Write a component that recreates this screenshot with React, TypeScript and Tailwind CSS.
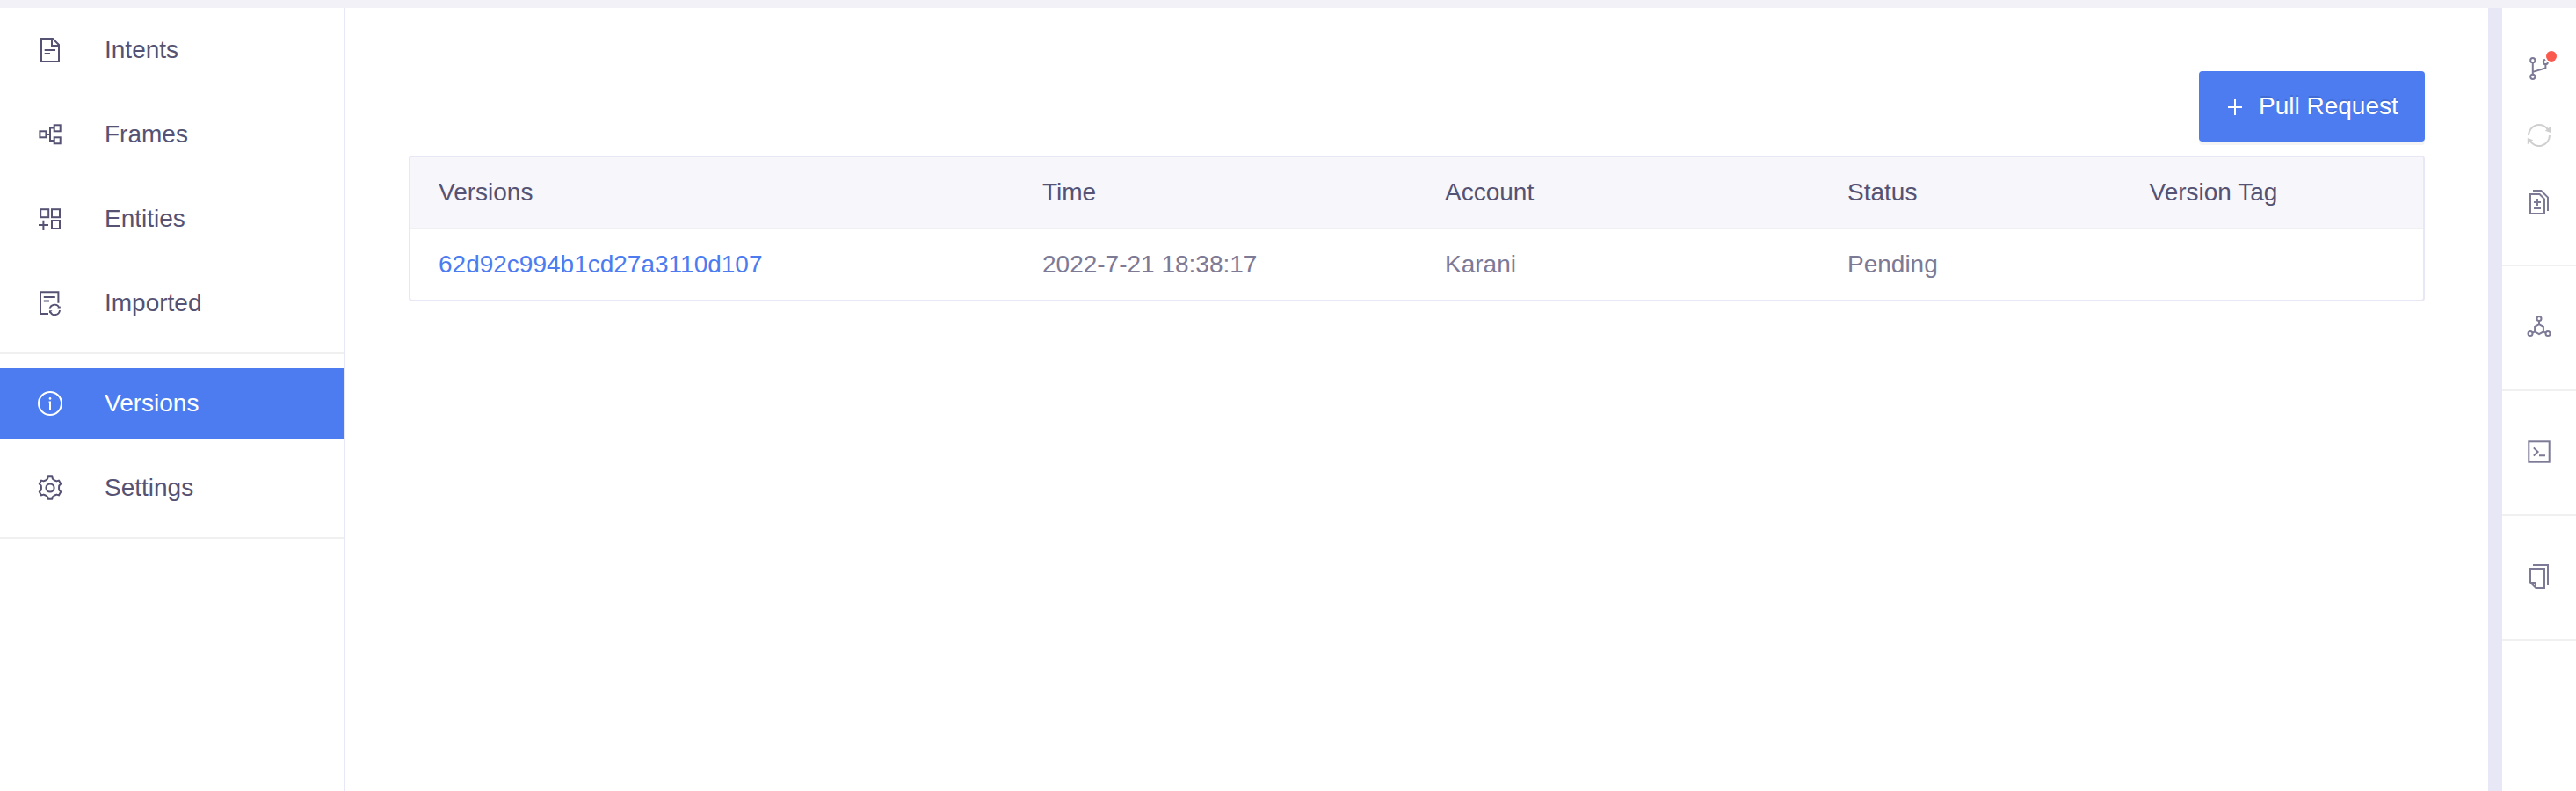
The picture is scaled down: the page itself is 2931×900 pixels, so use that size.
import type { ReactNode } from "react";

function Icon({ children }: { children: ReactNode }) {
  return (
    <svg
      className="h-7 w-7 shrink-0 overflow-visible"
      viewBox="0 0 28 28"
      fill="none"
      stroke="currentColor"
      strokeWidth={2}
    >
      {children}
    </svg>
  );
}

const IntentsIcon = () => (
  <Icon>
    <path d="M4 1H17L24 8V27H4Z" />
    <path d="M16 1V9H24" />
    <path d="M7.7 14H20M7.7 18H14" />
  </Icon>
);

const FramesIcon = () => (
  <Icon>
    <rect x="2.4" y="10.3" width="7" height="7" />
    <rect x="18.7" y="3.3" width="7" height="7" />
    <rect x="18.7" y="17.3" width="7" height="7" />
    <path d="M9.5 14H14M18 6.5H14V21H18" />
  </Icon>
);

const EntitiesIcon = () => (
  <Icon>
    <rect x="3.2" y="3.2" width="9" height="9" />
    <rect x="16" y="3.2" width="9" height="9" />
    <rect x="16" y="16" width="9" height="9" />
    <path d="M1 21H12M6.4 15.8V27" />
  </Icon>
);

const ImportedIcon = () => (
  <Icon>
    <path d="M23.4 13.7V1.3H3V26H12" />
    <path d="M6.8 7H19.8M6.8 11.4H13" />
    <path d="M13.7 20.6A5.6 5.6 0 0 1 24.4 19M25 22A5.6 5.6 0 0 1 14.3 23.8" strokeWidth={1.9} />
    <path d="M25.8 17.2V20.6H22.2ZM13 25.6V22.2H16.6Z" fill="currentColor" stroke="none" />
  </Icon>
);

const InfoIcon = () => (
  <Icon>
    <circle cx="14" cy="14" r="13" />
    <path d="M12.6 12.4H14V21" />
    <circle cx="14" cy="8.4" r="1.3" fill="currentColor" stroke="none" />
  </Icon>
);

const TOOTH = [
  [-4.2, -9.2],
  [-2.9, -10.2],
  [-2.3, -12.8],
  [2.3, -12.8],
  [2.9, -10.2],
  [4.2, -9.2],
];

function gearPath() {
  const points: string[] = [];
  for (let i = 0; i < 6; i++) {
    const a = (i * Math.PI) / 3;
    for (const [x, y] of TOOTH) {
      const px = 14 + x * Math.cos(a) - y * Math.sin(a);
      const py = 14 + x * Math.sin(a) + y * Math.cos(a);
      points.push(`${px.toFixed(2)} ${py.toFixed(2)}`);
    }
  }
  return `M${points.join("L")}Z`;
}

const GearIcon = () => (
  <Icon>
    <path d={gearPath()} strokeLinejoin="round" />
    <circle cx="14" cy="14" r="4.6" />
  </Icon>
);

const BranchIcon = () => (
  <Icon>
    <circle cx="6.8" cy="4.7" r="2.6" />
    <circle cx="6.8" cy="23.3" r="2.6" />
    <circle cx="21.4" cy="6.4" r="2.6" />
    <path d="M6.8 7.3V20.7M6.8 17.9L21.4 13.4V9" />
  </Icon>
);

const RefreshIcon = () => (
  <Icon>
    <path d="M2 14A12 12 0 0 1 24.8 8.8M26 14A12 12 0 0 1 3.2 19.2" />
    <path
      d="M27.2 3.8V11L20.8 8.8ZM0.8 24.2V17L7.2 19.2Z"
      fill="currentColor"
      stroke="none"
    />
  </Icon>
);

const DiffIcon = () => (
  <Icon>
    <path d="M4 5H14.6L20 10.4V27H4Z" />
    <path d="M7 1H16.4L24 8.6V24" />
    <path d="M8 14H16M12 10V18M8 21H16" />
  </Icon>
);

const GraphIcon = () => (
  <Icon>
    <circle cx="14" cy="4.4" r="2.5" />
    <circle cx="4" cy="21.6" r="2.5" />
    <circle cx="24" cy="21.6" r="2.5" />
    <path d="M14 11.2L18.9 13.9V19.4L14 22.2L9.1 19.4V13.9Z" />
    <path d="M14 6.9V11.2M9.1 19.4L6.2 20.8M18.9 19.4L21.8 20.8" />
  </Icon>
);

const TerminalIcon = () => (
  <Icon>
    <rect x="2.3" y="2.3" width="23.4" height="23.4" />
    <path d="M7.8 9.4L12.6 14L7.8 18.6M14 18.2H21" />
  </Icon>
);

const CopyIcon = () => (
  <Icon>
    <path d="M4 5H20V27H10.4L4 20.6Z" />
    <path d="M4 21H10V27" />
    <path d="M7 1H24V24" />
  </Icon>
);

function NavItem({ icon, label, active }: { icon: ReactNode; label: string; active?: boolean }) {
  return (
    <a
      className={
        active
          ? "flex h-20 items-center gap-12 bg-[#4c7cf0] pl-[43px] text-white"
          : "flex h-20 items-center gap-12 pl-[43px] text-[#555273]"
      }
    >
      {icon}
      <span>{label}</span>
    </a>
  );
}

const GRID = "grid h-20 grid-cols-[30%_20%_20%_15%_15%] items-center";

export default function App() {
  return (
    <div className="flex h-[900px] w-[2931px] flex-col overflow-hidden bg-white font-['Liberation_Sans',Arial,sans-serif] text-[28px] leading-[44px]">
      <header className="h-[9px] shrink-0 bg-[#f2f1f8]" />
      <div className="flex min-h-0 flex-1">
        <aside className="w-[393px] shrink-0 border-r-2 border-[#e8e7f6]">
          <nav className="flex flex-col gap-4 border-b-2 border-[#f0f0f0] pt-2 pb-4">
            <NavItem icon={<IntentsIcon />} label="Intents" />
            <NavItem icon={<FramesIcon />} label="Frames" />
            <NavItem icon={<EntitiesIcon />} label="Entities" />
            <NavItem icon={<ImportedIcon />} label="Imported" />
          </nav>
          <nav className="flex flex-col gap-4 border-b-2 border-[#f0f0f0] py-4">
            <NavItem icon={<InfoIcon />} label="Versions" active />
            <NavItem icon={<GearIcon />} label="Settings" />
          </nav>
        </aside>

        <main className="flex min-w-0 flex-1 flex-col gap-4 px-[72px] pt-[72px]">
          <button className="flex h-20 w-[257px] shrink-0 items-center gap-[19px] self-end rounded-[4px] bg-[#4c7cf0] pl-[33px] text-white shadow-[0_4px_0_rgba(0,0,0,0.045)] [text-shadow:0_-2px_0_rgba(0,0,0,0.12)]">
            <svg className="mt-0.5 h-[18px] w-4 shrink-0" viewBox="0 0 16 18" stroke="currentColor" strokeWidth={2}>
              <path d="M0 9H16M8 0V18" />
            </svg>
            <span className="whitespace-nowrap">Pull Request</span>
          </button>

          <section className="overflow-hidden rounded-[4px] border-2 border-[#e8e7f6]">
            <div className="border-b-2 border-[#f0f0f3] bg-[#f6f6fb] text-[#555273]">
              <div className={GRID}>
                <span className="pl-8">Versions</span>
                <span className="pl-8">Time</span>
                <span className="pl-8">Account</span>
                <span className="pl-8">Status</span>
                <span className="pl-8">Version Tag</span>
              </div>
            </div>
            <div className="text-[#7d7a96]">
              <div className={GRID}>
                <a className="pl-8 text-[#4c7cf0]">62d92c994b1cd27a3110d107</a>
                <span className="pl-8">2022-7-21 18:38:17</span>
                <span className="pl-8">Karani</span>
                <span className="pl-8">Pending</span>
                <span className="pl-8" />
              </div>
            </div>
          </section>
        </main>

        <aside className="w-[100px] shrink-0 border-l-[16px] border-[#e8e7f6] text-[#7d7a96]">
          <div className="flex h-[294px] flex-col items-center gap-12 border-b-2 border-[#f0f0f0] pt-[55px]">
            <div className="relative h-7 w-7">
              <BranchIcon />
              <span className="absolute -top-[6px] left-[22px] h-3 w-3 rounded-full bg-[#fa5a4e] ring-2 ring-white" />
            </div>
            <div className="h-7 w-7 text-[#cfcfcf]">
              <RefreshIcon />
            </div>
            <DiffIcon />
          </div>
          <div className="flex h-[142px] justify-center border-b-2 border-[#f0f0f0] pt-[55px]">
            <GraphIcon />
          </div>
          <div className="flex h-[142px] justify-center border-b-2 border-[#f0f0f0] pt-[55px]">
            <TerminalIcon />
          </div>
          <div className="flex h-[142px] justify-center border-b-2 border-[#f0f0f0] pt-[55px]">
            <CopyIcon />
          </div>
        </aside>
      </div>
    </div>
  );
}
